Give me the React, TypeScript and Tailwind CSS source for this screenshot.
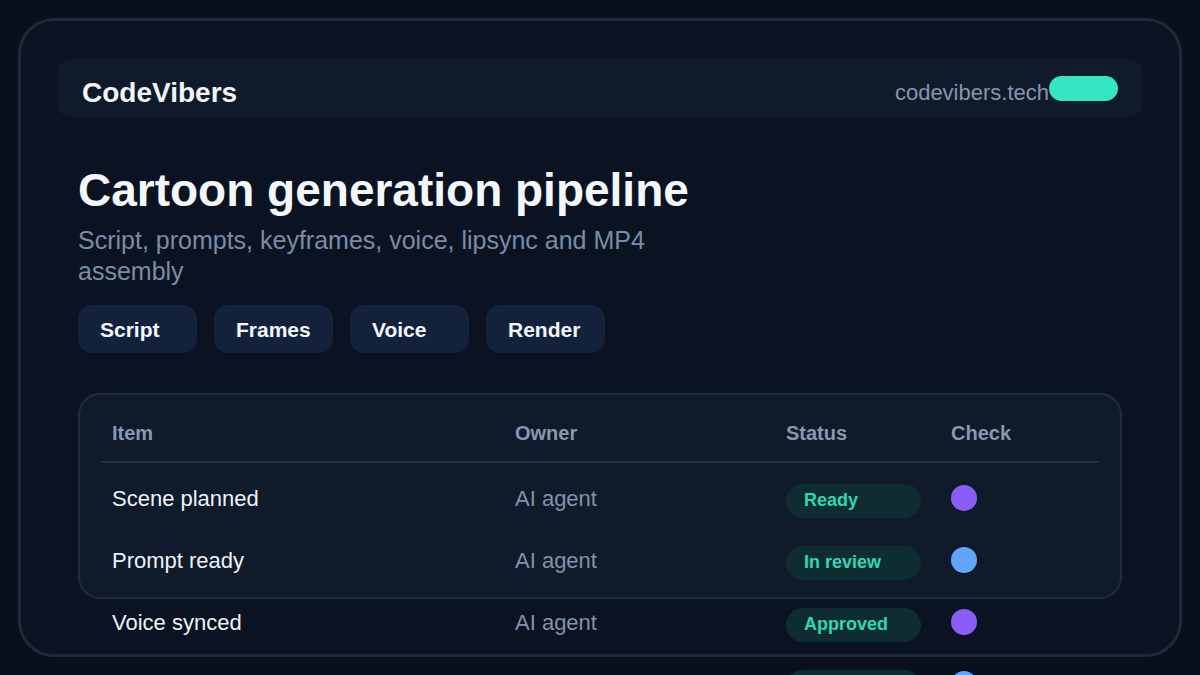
import React from "react";

const rows = [
  { item: "Scene planned", owner: "AI agent", status: "Ready", dot: "bg-[#8b5cf6]" },
  { item: "Prompt ready", owner: "AI agent", status: "In review", dot: "bg-[#60a5fa]" },
  { item: "Voice synced", owner: "AI agent", status: "Approved", dot: "bg-[#8b5cf6]" },
  { item: "MP4 exported", owner: "AI agent", status: "Ready", dot: "bg-[#60a5fa]" },
];

const chips = ["Script", "Frames", "Voice", "Render"];

export default function App() {
  return (
    <div className="min-h-screen bg-[#09101c] p-[18px] font-['Liberation_Sans',Arial,sans-serif]">
      <div className="h-[639px] rounded-[36px] border-[3px] border-[#1e2939] bg-[#0b1322] px-[36px] pt-[37px]">
        <header className="flex h-[60px] items-center justify-between rounded-[16px] bg-[#0f1a2b] px-[25px] pt-[9px]">
          <div className="text-[28px] font-bold leading-[42px] text-[#f1f5f9]">CodeVibers</div>
          <div className="flex items-center">
            <span className="text-[22px] leading-[34px] text-[#8595ad]">codevibers.tech</span>
            <span className="mb-[8px] h-[25px] w-[69px] rounded-full bg-[#35e6c3]" />
          </div>
        </header>

        <section className="px-[21px]">
          <h1 className="mt-[45px] text-[46px] font-bold leading-[1.2] text-[#f3f6fa]">
            Cartoon generation pipeline
          </h1>
          <p className="mt-[7px] max-w-[600px] text-[25px] leading-[31px] text-[#7b8ca5]">
            Script, prompts, keyframes, voice, lipsync and MP4 assembly
          </p>

          <div className="mt-[18px] flex gap-[17px]">
            {chips.map((c) => (
              <div
                key={c}
                className="flex h-[48px] w-[119px] items-center rounded-[14px] bg-[#13223a] pl-[22px] pt-[2px] text-[21px] font-bold text-[#f3f6fa]"
              >
                {c}
              </div>
            ))}
          </div>

          <div className="mt-[40px] h-[206px] rounded-[22px] border-2 border-[#1d2d45] bg-[#0f1a2b] px-[21px] pt-[12px]">
            <div className="grid grid-cols-[403px_271px_165px_158px] border-b-2 border-[#1f3350] pt-[11px] pb-[13px] text-[20px] font-bold leading-[30px] text-[#8798b0]">
              <div className="pl-[11px]">Item</div>
              <div className="pl-[11px]">Owner</div>
              <div className="pl-[11px]">Status</div>
              <div className="pl-[11px]">Check</div>
            </div>
            <div className="pt-[4px]">
              {rows.map((r, i) => (
                <div key={i} className="grid h-[62px] grid-cols-[403px_271px_165px_158px] items-center">
                  <div className="pl-[11px] text-[22px] text-[#eef2f7]">{r.item}</div>
                  <div className="pl-[11px] text-[22px] text-[#8292aa]">{r.owner}</div>
                  <div className="pl-[11px] pt-[5px]">
                    <span className="flex h-[34px] w-[135px] items-center rounded-full bg-[#0f2d30] pl-[18px] text-[18px] font-bold text-[#2fd7b5]">
                      {r.status}
                    </span>
                  </div>
                  <div className="pl-[11px]">
                    <span className={`block h-[26px] w-[26px] rounded-full ${r.dot}`} />
                  </div>
                </div>
              ))}
            </div>
          </div>
        </section>
      </div>
    </div>
  );
}
